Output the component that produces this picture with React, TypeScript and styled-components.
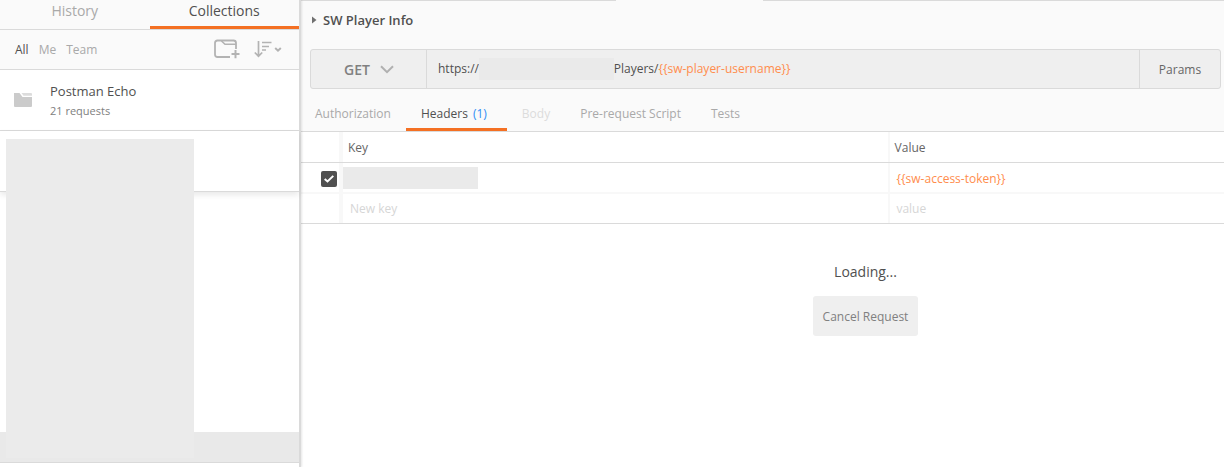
import React from 'react';
import styled, { createGlobalStyle } from 'styled-components';

const line = '#dadada';
const orange = '#f47023';

const Global = createGlobalStyle`
  * { box-sizing: border-box; }
  body { margin: 0; background: #fff; font-family: "Open Sans", sans-serif; color: #505050; }
`;

const Page = styled.div`
  display: flex;
  width: 1224px;
  height: 467px;
  overflow: hidden;
`;

const Sidebar = styled.aside`
  position: relative;
  z-index: 1;
  flex: 0 0 301px;
  border-right: 2px solid ${line};
  box-shadow: 1px 0 2px rgba(0, 0, 0, 0.1);
  background: #fff;
  display: flex;
  flex-direction: column;
`;

const SideTabs = styled.div`
  display: flex;
  height: 30px;
  background: #fafafa;
  border-bottom: 1px solid ${line};
`;

const SideTab = styled.div<{ $active?: boolean }>`
  flex: 1 1 0;
  text-align: center;
  font-size: 14px;
  line-height: 22px;
  color: ${p => (p.$active ? '#505050' : '#a9a9a9')};
  border-bottom: ${p => (p.$active ? `3px solid ${orange}` : '0')};
`;

const Filters = styled.div`
  display: flex;
  align-items: center;
  height: 40px;
  padding: 0 17px 0 15px;
  background: #fafafa;
  border-bottom: 1px solid ${line};
  font-size: 12px;
`;

const Filter = styled.span<{ $active?: boolean }>`
  margin-right: 10px;
  color: ${p => (p.$active ? '#505050' : '#a9a9a9')};
`;

const FilterIcons = styled.div`
  display: flex;
  align-items: center;
  gap: 14px;
  margin: -1px 0 0 auto;
  svg { display: block; }
`;

const Collection = styled.div`
  display: flex;
  height: 61px;
  padding: 12px 0 0 14px;
  border-bottom: 1px solid ${line};
  svg { margin-top: 11px; }
`;

const CollectionText = styled.div`
  margin-left: 18px;
`;

const CollectionName = styled.div`
  font-size: 13px;
  line-height: 19px;
`;

const CollectionMeta = styled.div`
  font-size: 11px;
  line-height: 16px;
  margin-top: 2px;
  color: #808080;
`;

const HiddenCollection = styled.div`
  height: 61px;
  border-bottom: 1px solid ${line};
  box-shadow: 0 3px 6px rgba(0, 0, 0, 0.09);
`;

const SelectedRequest = styled.div`
  height: 31px;
  margin-top: auto;
  margin-bottom: 4px;
  background: #e9e9e9;
  border-bottom: 1px solid ${line};
`;

const SideMask = styled.div`
  position: absolute;
  left: 6px;
  top: 139px;
  width: 188px;
  height: 319px;
  background: #ebebeb;
`;

const Main = styled.main`
  flex: 1 1 0;
  min-width: 0;
`;

const Builder = styled.header`
  height: 132px;
  background: #fafafa;
  border-bottom: 1px solid ${line};
`;

const OpenTabs = styled.div`
  display: flex;
  justify-content: space-between;
  height: 1px;
`;

const TabEdge = styled.div<{ $width: number }>`
  width: ${p => p.$width}px;
  background: ${line};
`;

const Title = styled.div`
  display: flex;
  align-items: center;
  height: 38px;
  padding-left: 11px;
  font-size: 13px;
  font-weight: 600;
  svg { margin-right: 6px; }
`;

const UrlBar = styled.div`
  display: flex;
  height: 40px;
  margin: 10px 3px 0 9px;
  background: #efefef;
  border: 1px solid ${line};
  border-radius: 3px;
`;

const Method = styled.div`
  display: flex;
  align-items: center;
  width: 116px;
  padding: 1px 0 0 33px;
  font-size: 14px;
  font-weight: 600;
  color: #808080;
  border-right: 1px solid ${line};
  svg { margin: -1px 0 0 10px; }
`;

const Url = styled.div`
  display: flex;
  align-items: center;
  flex: 1;
  padding: 0 0 1px 11px;
  font-size: 12px;
`;

const UrlPath = styled.span`
  margin-left: -0.2px;
`;

const Mask = styled.span<{ $width: number }>`
  width: ${p => p.$width}px;
  height: 22px;
  background: #eaeaea;
`;

const Variable = styled.span`
  color: #ff8d4d;
`;

const Params = styled.div`
  width: 81px;
  border-left: 1px solid ${line};
  font-size: 12px;
  line-height: 40px;
  text-align: center;
  color: #666;
`;

const Sections = styled.nav`
  display: flex;
  height: 42px;
  padding-left: 14px;
`;

const Section = styled.div<{ $gap: number; $state?: 'active' | 'disabled' }>`
  margin-right: ${p => p.$gap}px;
  padding: ${p => (p.$state === 'active' ? '0 20px 0 15px' : '0')};
  font-size: 12px;
  line-height: 49px;
  white-space: pre;
  color: ${p => (p.$state === 'active' ? '#505050' : p.$state === 'disabled' ? '#dcdcdc' : '#a9a9a9')};
  border-bottom: ${p => (p.$state === 'active' ? `3px solid ${orange}` : '0')};
`;

const Count = styled.span`
  color: #2f8ef5;
  margin-left: 5px;
`;

const Row = styled.div<{ $height: number; $edge: string }>`
  display: grid;
  grid-template-columns: 42px 547px 1fr;
  height: ${p => p.$height}px;
  border-bottom: ${p => p.$edge};
  font-size: 12px;
`;

const Cell = styled.div<{ $pad?: number; $drop?: number; $edge?: number; $muted?: boolean }>`
  display: flex;
  align-items: center;
  padding: ${p => p.$drop ?? 0}px 0 0 ${p => p.$pad ?? 0}px;
  border-right: ${p => p.$edge ?? 0}px solid #f8f8f8;
  color: ${p => (p.$muted ? '#d6d6d6' : '#666')};
`;

const Checkbox = styled.span`
  display: flex;
  align-items: center;
  justify-content: center;
  width: 16px;
  height: 16px;
  border-radius: 2px;
  background: #505050;
`;

const Response = styled.section`
  display: flex;
  flex-direction: column;
  align-items: center;
  padding: 38px 0 0 206px;
`;

const Loading = styled.div`
  font-size: 14px;
  line-height: 20px;
`;

const Cancel = styled.button`
  width: 105px;
  height: 40px;
  margin-top: 14px;
  padding: 0;
  border: 0;
  border-radius: 3px;
  background: #efefef;
  color: #808080;
  font: 12px "Open Sans", sans-serif;
`;

const NewFolderIcon = () => (
  <svg width="26" height="20" viewBox="0 0 26 20" fill="none" stroke="#b3b3b3" strokeWidth="1.800">
    <path d="M16 18H3.500Q1 18 1 15.500V4Q1 1.500 3.500 1.500H19.500Q22 1.500 22 4V10" />
    <path d="M7.500 2L11 5.300H22" strokeWidth="1.600" />
    <path d="M21.500 11V19.300M17.500 15H25.500" strokeWidth="2" />
  </svg>
);

const SortIcon = () => (
  <svg width="28" height="18" viewBox="0 0 28 18" fill="none" stroke="#b3b3b3" strokeWidth="1.700">
    <path d="M4.500 1V16M0.800 12.500L4.500 16.200L8.200 12.500" />
    <path d="M8 2.500H17.500M8 6.500H15M8 10H12" />
    <path d="M21.200 8L24 10.700L26.800 8" strokeWidth="2" />
  </svg>
);

const FolderIcon = () => (
  <svg width="18" height="14" viewBox="0 0 18 14" fill="#cbcbcb">
    <path d="M0 0H5.500L8.500 4H18V13Q18 14 17 14H1Q0 14 0 13Z" />
    <path d="M7.500 0H17Q18 0 18 1V2.800H9.500Z" fill="#dcdcdc" />
  </svg>
);

export default function App() {
  return (
    <>
      <Global />
      <Page>
        <Sidebar>
          <SideTabs>
            <SideTab>History</SideTab>
            <SideTab $active>Collections</SideTab>
          </SideTabs>
          <Filters>
            <Filter $active>All</Filter>
            <Filter>Me</Filter>
            <Filter>Team</Filter>
            <FilterIcons>
              <NewFolderIcon />
              <SortIcon />
            </FilterIcons>
          </Filters>
          <Collection>
            <FolderIcon />
            <CollectionText>
              <CollectionName>Postman Echo</CollectionName>
              <CollectionMeta>21 requests</CollectionMeta>
            </CollectionText>
          </Collection>
          <HiddenCollection />
          <SelectedRequest />
          <SideMask />
        </Sidebar>
        <Main>
          <Builder>
            <OpenTabs>
              <TabEdge $width={315} />
              <TabEdge $width={461} />
            </OpenTabs>
            <Title>
              <svg width="5" height="8" viewBox="0 0 5 8" fill="#707070">
                <path d="M0 0.500L4.500 4L0 7.500Z" />
              </svg>
              SW Player Info
            </Title>
            <UrlBar>
              <Method>
                GET
                <svg width="14" height="9" viewBox="0 0 14 9" fill="none" stroke="#b0b0b0" strokeWidth="2">
                  <path d="M1 1.200L7 7.200L13 1.200" />
                </svg>
              </Method>
              <Url>
                <span>https://</span>
                <Mask $width={135} />
                <UrlPath>
                  Players/<Variable>{'{{sw-player-username}}'}</Variable>
                </UrlPath>
              </Url>
              <Params>Params</Params>
            </UrlBar>
            <Sections>
              <Section $gap={15}>Authorization</Section>
              <Section $gap={15} $state="active">
                Headers<Count>(1)</Count>
              </Section>
              <Section $gap={30} $state="disabled">Body</Section>
              <Section $gap={30}>Pre-request Script</Section>
              <Section $gap={0}>Tests</Section>
            </Sections>
          </Builder>
          <Row $height={31} $edge={`1px solid ${line}`}>
            <Cell $edge={4} />
            <Cell $pad={5} $edge={2}>Key</Cell>
            <Cell $pad={4.6}>Value</Cell>
          </Row>
          <Row $height={31} $edge="2px solid #f8f8f8">
            <Cell $pad={20} $drop={2} $edge={4}>
              <Checkbox>
                <svg width="10" height="8" viewBox="0 0 10 8" fill="none" stroke="#fff" strokeWidth="2">
                  <path d="M0.700 4L3.500 6.500L9.300 0.900" />
                </svg>
              </Checkbox>
            </Cell>
            <Cell $edge={2}>
              <Mask $width={135} />
            </Cell>
            <Cell $pad={6.6} $drop={2}>
              <Variable>{'{{sw-access-token}}'}</Variable>
            </Cell>
          </Row>
          <Row $height={30} $edge={`1px solid ${line}`}>
            <Cell $edge={4} />
            <Cell $pad={7} $edge={2} $muted>New key</Cell>
            <Cell $pad={6.4} $muted>value</Cell>
          </Row>
          <Response>
            <Loading>Loading...</Loading>
            <Cancel>Cancel Request</Cancel>
          </Response>
        </Main>
      </Page>
    </>
  );
}
